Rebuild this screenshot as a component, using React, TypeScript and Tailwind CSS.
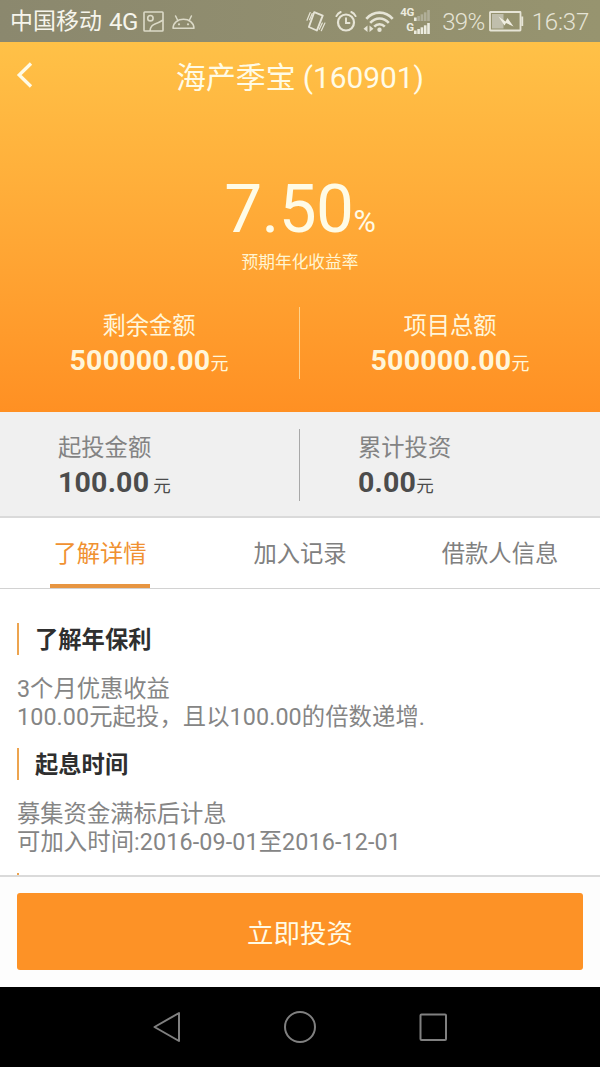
import type { ReactNode } from 'react';

function ImageIcon() {
  return (
    <svg className="ml-[5px] shrink-0" width="21" height="22" viewBox="0 0 21 22" fill="none" stroke="#dcdac8" strokeWidth="1.6">
      <rect x="1" y="1" width="19" height="19" rx="0.8" />
      <circle cx="7.4" cy="7.2" r="2.7" />
      <path d="M7 20C7.500 15 9.500 14 12.500 12.800C15.500 11.800 17.500 10.500 20 9" />
    </svg>
  );
}

function AndroidIcon() {
  return (
    <svg className="ml-2 shrink-0" width="23" height="15" viewBox="0 0 23 15" fill="none" stroke="#dcdac8" strokeWidth="1.5">
      <path d="M1 13.200C1.300 7.500 6 4.300 11.500 4.300S21.700 7.500 22 13.200Z" strokeLinejoin="round" />
      <path d="M5.800 5.500L3.600 1M17.200 5.500L19.400 1" strokeLinecap="round" />
      <circle cx="7" cy="9.300" r="1.100" fill="#dcdac8" stroke="none" />
      <circle cx="16" cy="9.300" r="1.100" fill="#dcdac8" stroke="none" />
    </svg>
  );
}

function VibrateIcon() {
  return (
    <svg className="shrink-0" width="20" height="22" viewBox="0 0 20 22" fill="none" stroke="#e6e4d6" strokeWidth="1.9" strokeLinejoin="round" strokeLinecap="round">
      <path d="M8.200 1.200L16.700 4.600L10.900 19.500L2.900 16Z" />
      <path d="M4.200 1.500L1 9.300M6.200 2.500L3.600 8.700M18.900 12L15.300 19.700M16.300 12L13.300 18.300" strokeWidth="1.200" />
    </svg>
  );
}

function AlarmIcon() {
  return (
    <svg className="ml-[9px] shrink-0" width="22" height="22" viewBox="0 0 22 22" fill="none" stroke="#e6e4d6" strokeWidth="2.200" strokeLinecap="round">
      <circle cx="11" cy="11.500" r="8" />
      <path d="M11 7.300V12H14.500" strokeWidth="1.900" />
      <path d="M1.400 5.100C2.300 3.300 3.800 1.800 5.700 1M20.600 5.100C19.700 3.300 18.200 1.800 16.300 1" strokeWidth="1.900" />
    </svg>
  );
}

function WifiIcon() {
  return (
    <svg className="ml-[6px] shrink-0" width="31" height="22" viewBox="0 0 31 22" fill="none" stroke="#e6e4d6" strokeWidth="2.600">
      <path d="M3.300 7.800C10.500 -0.500 22.500 -0.500 29.700 7.800" />
      <path d="M7.200 11.800C12.500 6 20.500 6 25.800 11.800" />
      <path d="M11.200 15.600C14.300 12.500 18.700 12.500 21.800 15.600" />
      <circle cx="16.500" cy="18.700" r="2.200" fill="#e6e4d6" stroke="none" />
      <path d="M4.500 14.500V21L0.500 17.700ZM6.500 14.500V21L10.500 17.700Z" fill="#e6e4d6" stroke="none" />
    </svg>
  );
}

function Bars({ faded = false }: { faded?: boolean }) {
  const fill = faded ? '#b0ae98' : '#ecebdf';
  return (
    <svg className="shrink-0" width="16" height="12" viewBox="0 0 16 12">
      <rect x="0" y="7.500" width="2.600" height="3.500" fill="#ecebdf" />
      <rect x="3.300" y="6" width="2.600" height="5" fill={fill} />
      <rect x="6.600" y="4.300" width="2.600" height="6.700" fill={fill} />
      <rect x="9.900" y="2.300" width="2.600" height="8.700" fill={fill} />
      <rect x="13.200" y="0" width="2.600" height="11" fill={fill} />
    </svg>
  );
}

function SignalPair() {
  return (
    <div className="ml-[6px] flex w-[31px] flex-col text-[11.500px] leading-[11px] font-bold text-[#ecebdf]">
      <div className="flex h-[14px] items-start">
        <span className="-mt-px w-[14px] tracking-[-0.300px]">4G</span>
        <div className="pt-[2px]"><Bars faded /></div>
      </div>
      <div className="flex h-[14px] items-start">
        <span className="w-[14px] pl-[6px]">G</span>
        <div className="pt-[1px]"><Bars /></div>
      </div>
    </div>
  );
}

function BatteryIcon() {
  return (
    <svg className="ml-1 shrink-0" width="35" height="22" viewBox="0 0 35 22">
      <rect x="1" y="1" width="30.500" height="18.500" rx="0.500" fill="none" stroke="#e6e4d6" strokeWidth="1.800" />
      <rect x="3" y="3" width="11.500" height="14.500" fill="#c0beac" />
      <rect x="32.300" y="5.500" width="1.900" height="9.500" fill="#e6e4d6" />
      <path d="M9.500 5.500L16.500 10.500L18.500 7L24.500 15.500L17 12L15.500 14.500Z" fill="#f0eee2" />
    </svg>
  );
}

function StatusBar() {
  return (
    <div className="flex h-[42px] shrink-0 items-center bg-linear-to-r from-[#8b886e] to-[#97946f] pt-[2px] pr-[11px] pl-[10px] text-[#e6e4d6]">
      <span className="pt-px text-[23px] text-[#f6f5ec]">中国移动</span>
      <span className="ml-[7px] text-[24px] tracking-[-0.600px] text-[#f6f5ec]">4G</span>
      <ImageIcon />
      <AndroidIcon />
      <div className="ml-auto flex items-center">
        <VibrateIcon />
        <AlarmIcon />
        <WifiIcon />
        <SignalPair />
        <span className="ml-[11px] text-[24px] font-light tracking-[-0.600px]">39%</span>
        <BatteryIcon />
        <span className="ml-[8px] text-[24px] font-light tracking-[-0.200px]">16:37</span>
      </div>
    </div>
  );
}

function Amount({ label, value }: { label: string; value: string }) {
  return (
    <div className="flex flex-1 flex-col items-center text-[#fff6da]">
      <div className="h-[36px] pt-px text-[23.300px] leading-[36px]">{label}</div>
      <div className="flex h-[36px] items-baseline leading-[36px]">
        <span className="text-[28.500px] font-bold tracking-[0.200px]">{value}</span>
        <span className="text-[18px]">元</span>
      </div>
    </div>
  );
}

function Stat({ label, value, spaced = false }: { label: string; value: string; spaced?: boolean }) {
  return (
    <div className="flex-1 pl-[58px]">
      <div className="h-[36px] pt-px text-[23.300px] leading-[36px] text-[#838383]">{label}</div>
      <div className="flex h-[36px] items-baseline leading-[36px] text-[#4c4c4c]">
        <span className="text-[28.500px] font-bold tracking-[0.200px]">{value}</span>
        <span className={spaced ? 'pl-1 text-[17.500px]' : 'text-[17.500px]'}>元</span>
      </div>
    </div>
  );
}

function Tab({ label, active = false }: { label: string; active?: boolean }) {
  return (
    <div className="flex flex-1 flex-col items-center justify-between">
      <div className={active ? 'pt-[18px] text-[23.3px] leading-[36px] text-[#f09131]' : 'pt-[18px] text-[23.3px] leading-[36px] text-[#808080]'}>{label}</div>
      {active && <div className="h-1 w-[100px] bg-[#e79541]" />}
    </div>
  );
}

function Section({ title, children }: { title: string; children: ReactNode }) {
  return (
    <section>
      <h2 className="flex h-8 items-center border-l-2 border-[#eda44f] pt-[2px] pl-4 text-[23.300px] leading-8 font-bold text-[#2f2f2f]">{title}</h2>
      <div className="pt-[21px] pb-[17px] text-[23.300px] leading-[27.500px] text-[#858585]">{children}</div>
    </section>
  );
}

export default function App() {
  return (
    <div className="flex h-[1067px] w-[600px] flex-col overflow-hidden bg-white font-['Roboto','Noto_Sans_CJK_SC',sans-serif]">
      <StatusBar />
      <div className="flex h-[370px] shrink-0 flex-col bg-linear-to-b from-[#ffc147] to-[#ff9023] text-[#fffbe6]">
        <header className="grid h-[70px] grid-cols-[60px_1fr_60px] items-center">
          <svg className="ml-4 -mt-[5px]" width="18" height="28" viewBox="0 0 18 28" fill="none" stroke="#fffbe6" strokeWidth="3.300">
            <path d="M15 2.500L3.200 14L15 25.500" />
          </svg>
          <h1 className="pt-[2px] text-center text-[29.900px] leading-[44px] tracking-[-0.050px]">海产季宝 (160901)</h1>
        </header>
        <div className="flex h-[92px] items-baseline justify-center pt-[55px] leading-[84px]">
          <span className="text-[67.500px] tracking-[-0.600px]">7.50</span>
          <span className="text-[30.500px]">%</span>
        </div>
        <div className="mt-[45px] text-center text-[16.700px] leading-[28px] text-[#fff5d2]">预期年化收益率</div>
        <div className="mt-[30px] -ml-px flex">
          <Amount label="剩余金额" value="500000.00" />
          <div className="h-[72px] w-px bg-[#ffd28b]" />
          <Amount label="项目总额" value="500000.00" />
        </div>
      </div>
      <div className="flex h-[106px] shrink-0 border-b-2 border-[#dadada] bg-[#f0f0f0] pt-[17px] pr-px">
        <Stat label="起投金额" value="100.00" spaced />
        <div className="h-[72px] w-px bg-[#a8a8a8]" />
        <Stat label="累计投资" value="0.00" />
      </div>
      <nav className="flex h-[71px] shrink-0 border-b border-[#d2d2d2]">
        <Tab label="了解详情" active />
        <Tab label="加入记录" />
        <Tab label="借款人信息" />
      </nav>
      <main className="flex min-h-0 flex-1 flex-col overflow-hidden pt-[34px] pl-[17px]">
        <Section title="了解年保利">
          <p>3个月优惠收益</p>
          <p className="tracking-[0.100px]">100.00元起投，且以100.00的倍数递增.</p>
        </Section>
        <Section title="起息时间">
          <p>募集资金满标后计息</p>
          <p className="tracking-[0.120px]">可加入时间:2016-09-01至2016-12-01</p>
        </Section>
        <div className="h-8 w-[2px] shrink-0 bg-[#eda44f]" />
      </main>
      <div className="h-[112px] shrink-0 border-t-2 border-[#dadada] bg-[#fdfdfd] px-[17px] pt-4">
        <button className="flex h-[77px] w-full items-center justify-center rounded-[3px] bg-[#fd9226] pt-[5px] text-[26.500px] text-[#fffbe6]">立即投资</button>
      </div>
      <div className="flex h-[80px] shrink-0 items-center justify-center bg-black">
        <svg width="296" height="34" viewBox="0 0 296 34" fill="none" stroke="#808080" strokeWidth="2" strokeLinejoin="round">
          <path d="M2.500 17L27 3V31Z" />
          <circle cx="148" cy="17" r="15" />
          <rect x="268.500" y="4.500" width="25.500" height="25.500" rx="1" />
        </svg>
      </div>
    </div>
  );
}
